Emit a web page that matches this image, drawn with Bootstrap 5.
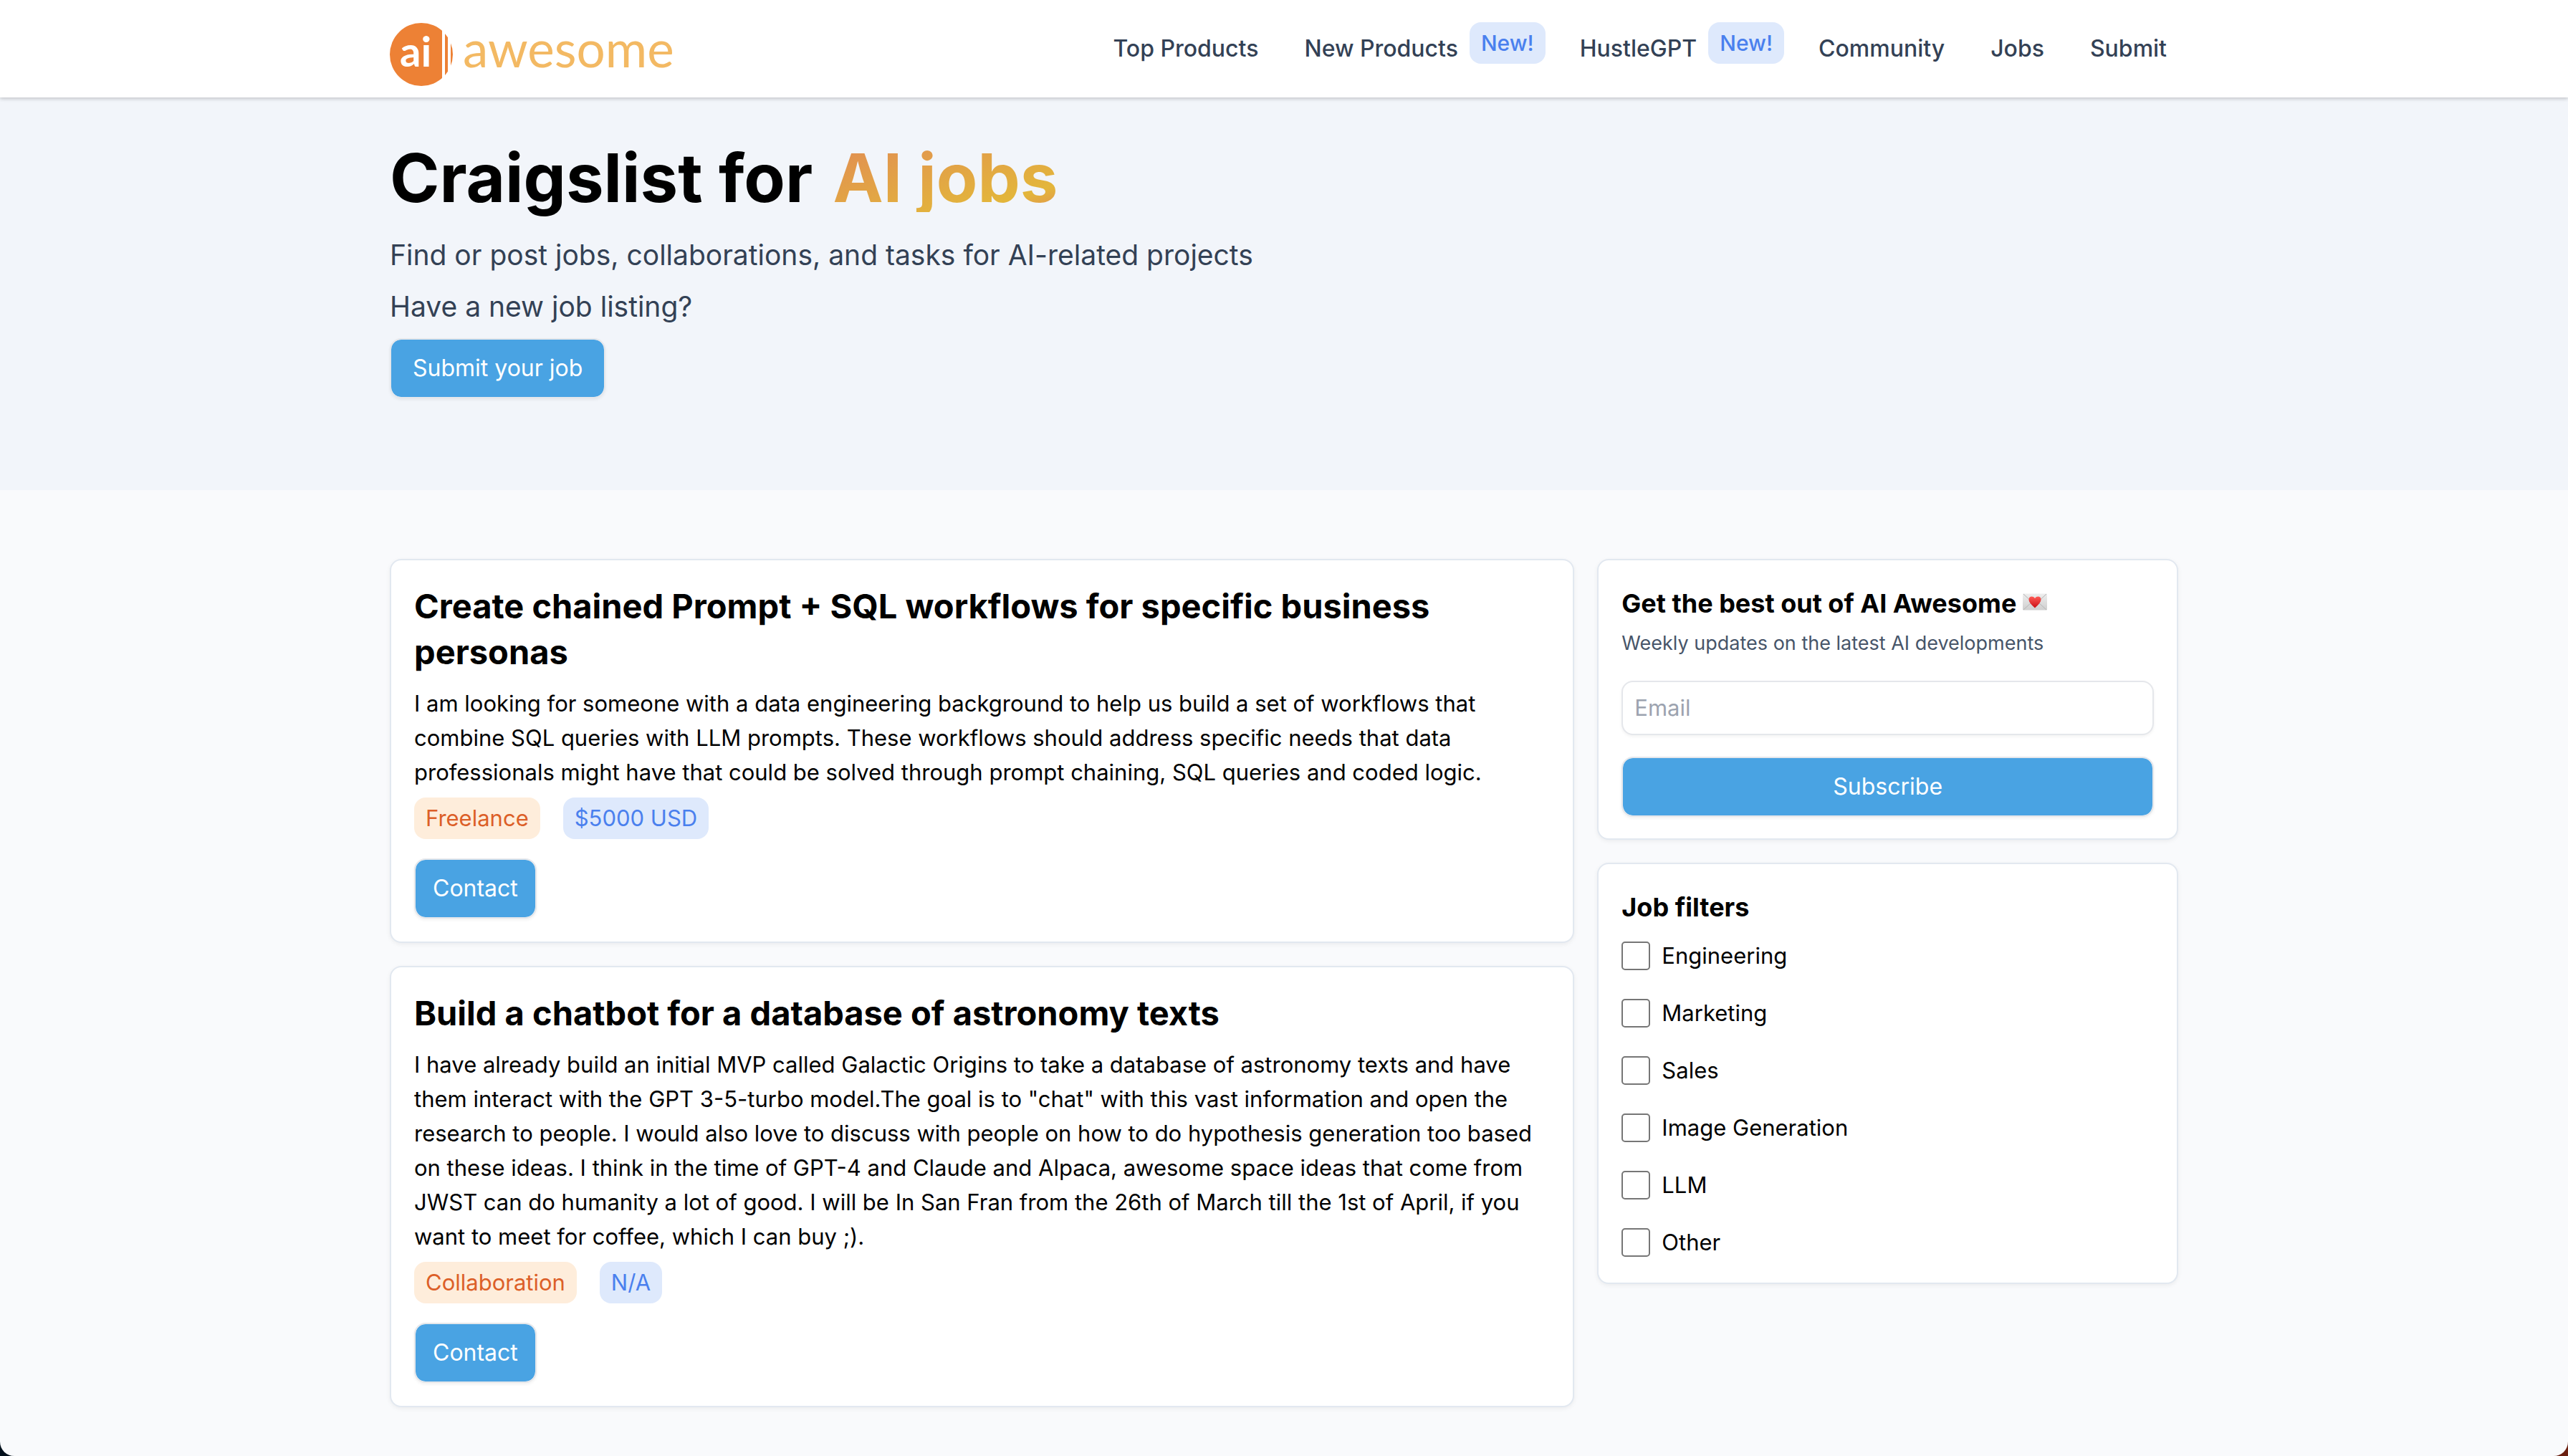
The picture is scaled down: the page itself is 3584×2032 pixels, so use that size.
<!DOCTYPE html>
<html lang="en">
<head>
<meta charset="utf-8">
<meta name="viewport" content="width=device-width, initial-scale=1">
<title>AI Awesome - Craigslist for AI jobs</title>
<link href="https://cdn.jsdelivr.net/npm/bootstrap@5.3.0/dist/css/bootstrap.min.css" rel="stylesheet">
<style>
  html {
    font-size: 32px;
    background: linear-gradient(to right, #02101c 50%, #6b1f10 50%);
  }
  body {
    min-height: 100vh;
    font-family: Inter, "Liberation Sans", sans-serif;
    font-size: 31px;
    line-height: 48px;
    color: #000;
    background: #f9fafc;
    border-radius: 0 0 20px 20px;
  }
  .page-wrap { max-width: 2560px; padding: 0 32px; }

  .site-header { background: #fff; box-shadow: 0 2px 6px rgba(0, 0, 0, .1), 0 2px 4px rgba(0, 0, 0, .1); position: relative; }
  .site-header .page-wrap { min-height: 136px; }
  .brand-logo { width: 400px; height: 88px; overflow: visible; }
  .site-nav { font-size: 32px; font-weight: 500; }
  .site-nav a { color: #334155; padding: 0 16px; }
  .new-tag { margin-bottom: 16px; font-size: 30px; }

  .pill { line-height: 58px; padding: 0 16px; border-radius: 16px; }
  .pill-blue { background: #dee9fc; color: #4a80ee; }
  .pill-orange { background: #feeddb; color: #dc5f28; }
  .pill-row { margin: 11px 0 27px; }

  .hero { background: #f2f5fa; padding: 64px 0 128px; }
  .hero h1 { font-size: 94px; line-height: 96px; font-weight: 700; margin-bottom: 32px; }
  .hero h1 span {
    margin-left: 6px;
    background: linear-gradient(to bottom right, #e18d53, #e3b63b 80%, #e19150);
    -webkit-background-clip: text;
    background-clip: text;
    color: transparent;
  }
  .hero p { font-size: 39px; line-height: 56px; margin-bottom: 16px; color: #334155; }

  .btn-sky {
    --bs-btn-color: #fff;
    --bs-btn-bg: #49a3e3;
    --bs-btn-border-color: #e5e7eb;
    --bs-btn-hover-color: #fff;
    --bs-btn-hover-bg: #3b93d3;
    --bs-btn-hover-border-color: #e5e7eb;
    --bs-btn-font-size: 32px;
    --bs-btn-font-weight: 400;
    --bs-btn-line-height: 48px;
    --bs-btn-padding-y: 16px;
    --bs-btn-padding-x: 30px;
    --bs-btn-border-width: 2px;
    --bs-btn-border-radius: 16px;
    background-clip: padding-box;
    box-shadow: 0 2px 4px rgba(0, 0, 0, .06);
  }
  .btn-contact { --bs-btn-padding-x: 24px; }

  .board { padding: 96px 0 68px; }
  .panel {
    padding: 32px;
    background: #fff;
    border: 2px solid #e2e8f0;
    border-radius: 16px;
    box-shadow: 0 2px 6px rgba(0, 0, 0, .06);
  }
  .panel h2 { font-size: 47px; line-height: 64px; font-weight: 700; margin-bottom: 16px; }
  .panel h3 { font-size: 36px; line-height: 56px; font-weight: 700; margin-bottom: 8px; }
  .panel .tagline { font-size: 27px; line-height: 40px; color: #475569; margin-bottom: 32px; }
  .signup { padding-bottom: 30px; }
  .signup .btn { margin-top: 30px; }
  .mail-icon { width: 34px; height: 24px; margin-bottom: 10px; }
  .email-box {
    font-size: 31px;
    line-height: 48px;
    padding: 12px 16px;
    border: 2px solid #e5e7eb;
    border-radius: 16px;
    box-shadow: 0 2px 4px rgba(0, 0, 0, .05);
  }
  .email-box::placeholder { color: #9ca3af; }
  .tick {
    width: 40px;
    height: 40px;
    margin: 0;
    border: 2px solid #767676;
  }
  .tick[type=checkbox] { border-radius: 5px; }
</style>
</head>
<body>
<header class="site-header">
  <div class="container-fluid page-wrap d-flex align-items-center justify-content-between">
    <a href="#" class="d-flex pt-2" aria-label="AI Awesome home">
      <svg class="brand-logo" viewBox="0 0 400 88">
        <defs>
          <clipPath id="slices"><path d="M0 0H73V88H0zM77 0H81V88H77zM85 0H89V88H85z"/></clipPath>
        </defs>
        <circle cx="44" cy="44" r="44" fill="#ed8135" clip-path="url(#slices)"/>
        <text x="14" y="61" font-family="Lato, sans-serif" font-weight="700" font-size="58" fill="#fff">ai</text>
        <text x="102" y="62" font-family="Lato, sans-serif" font-size="71" fill="#f3b963">awesome</text>
      </svg>
    </a>
    <nav class="site-nav d-flex align-items-center gap-3" aria-label="Main">
      <a href="#" class="text-decoration-none">Top Products</a>
      <div class="d-flex align-items-center"><a href="#" class="text-decoration-none">New Products</a><span class="pill pill-blue new-tag">New!</span></div>
      <div class="d-flex align-items-center"><a href="#" class="text-decoration-none">HustleGPT</a><span class="pill pill-blue new-tag">New!</span></div>
      <a href="#" class="text-decoration-none">Community</a>
      <a href="#" class="text-decoration-none">Jobs</a>
      <a href="#" class="text-decoration-none">Submit</a>
    </nav>
  </div>
</header>

<section class="hero">
  <div class="container-fluid page-wrap">
    <h1>Craigslist for <span class="d-inline-block align-top">AI jobs</span></h1>
    <p>Find or post jobs, collaborations, and tasks for AI-related projects</p>
    <p>Have a new job listing?</p>
    <button type="button" class="btn btn-sky d-block">Submit your job</button>
  </div>
</section>

<main class="board">
  <div class="container-fluid page-wrap">
    <div class="row g-3 align-items-start">
      <div class="col-8 d-flex flex-column gap-3">
        <article class="panel">
          <h2>Create chained Prompt + SQL workflows for specific business personas</h2>
          <p class="m-0">I am looking for someone with a data engineering background to help us build a set of workflows that combine SQL queries with LLM prompts. These workflows should address specific needs that data professionals might have that could be solved through prompt chaining, SQL queries and coded logic.</p>
          <div class="pill-row d-flex gap-3">
            <span class="pill pill-orange">Freelance</span>
            <span class="pill pill-blue">$5000 USD</span>
          </div>
          <button type="button" class="btn btn-sky btn-contact d-block">Contact</button>
        </article>
        <article class="panel">
          <h2>Build a chatbot for a database of astronomy texts</h2>
          <p class="m-0">I have already build an initial MVP called Galactic Origins to take a database of astronomy texts and have them interact with the GPT 3-5-turbo model.The goal is to "chat" with this vast information and open the research to people. I would also love to discuss with people on how to do hypothesis generation too based on these ideas. I think in the time of GPT-4 and Claude and Alpaca, awesome space ideas that come from JWST can do humanity a lot of good. I will be In San Fran from the 26th of March till the 1st of April, if you want to meet for coffee, which I can buy ;).</p>
          <div class="pill-row d-flex gap-3">
            <span class="pill pill-orange">Collaboration</span>
            <span class="pill pill-blue">N/A</span>
          </div>
          <button type="button" class="btn btn-sky btn-contact d-block">Contact</button>
        </article>
      </div>
      <aside class="col-4 d-flex flex-column gap-3">
        <form class="panel signup">
          <h3>Get the best out of AI Awesome
            <svg class="mail-icon align-middle" viewBox="0 0 34 24" role="img" aria-label="Love letter">
              <defs>
                <linearGradient id="paper" x2="0" y2="1"><stop stop-color="#eeeeee"/><stop offset="1" stop-color="#cfcfcf"/></linearGradient>
                <linearGradient id="heart" x2="0" y2="1"><stop stop-color="#ff5a55"/><stop offset="1" stop-color="#c90f14"/></linearGradient>
              </defs>
              <rect width="34" height="23" y=".5" rx="1" fill="url(#paper)"/>
              <path d="M1 23 13 12M33 23 21 12M1 1l16 15L33 1" fill="none" stroke="#b5b5b5"/>
              <path d="M17 20.500C12 16 8.500 12.500 8.500 8.500 8.500 4 14.500 3 17 7 19.500 3 25.500 4 25.500 8.500 25.500 12.500 22 16 17 20.500z" fill="url(#heart)"/>
            </svg>
          </h3>
          <p class="tagline">Weekly updates on the latest AI developments</p>
          <input type="email" class="form-control email-box" placeholder="Email" aria-label="Email">
          <button type="submit" class="btn btn-sky w-100 d-block">Subscribe</button>
        </form>
        <section class="panel">
          <h3 class="mb-2">Job filters</h3>
          <div class="d-flex flex-column gap-3">
            <div class="d-flex align-items-center gap-2"><input type="checkbox" class="form-check-input tick" id="f1"><label for="f1">Engineering</label></div>
            <div class="d-flex align-items-center gap-2"><input type="checkbox" class="form-check-input tick" id="f2"><label for="f2">Marketing</label></div>
            <div class="d-flex align-items-center gap-2"><input type="checkbox" class="form-check-input tick" id="f3"><label for="f3">Sales</label></div>
            <div class="d-flex align-items-center gap-2"><input type="checkbox" class="form-check-input tick" id="f4"><label for="f4">Image Generation</label></div>
            <div class="d-flex align-items-center gap-2"><input type="checkbox" class="form-check-input tick" id="f5"><label for="f5">LLM</label></div>
            <div class="d-flex align-items-center gap-2"><input type="checkbox" class="form-check-input tick" id="f6"><label for="f6">Other</label></div>
          </div>
        </section>
      </aside>
    </div>
  </div>
</main>
<script src="https://cdn.jsdelivr.net/npm/bootstrap@5.3.0/dist/js/bootstrap.bundle.min.js"></script>
</body>
</html>
